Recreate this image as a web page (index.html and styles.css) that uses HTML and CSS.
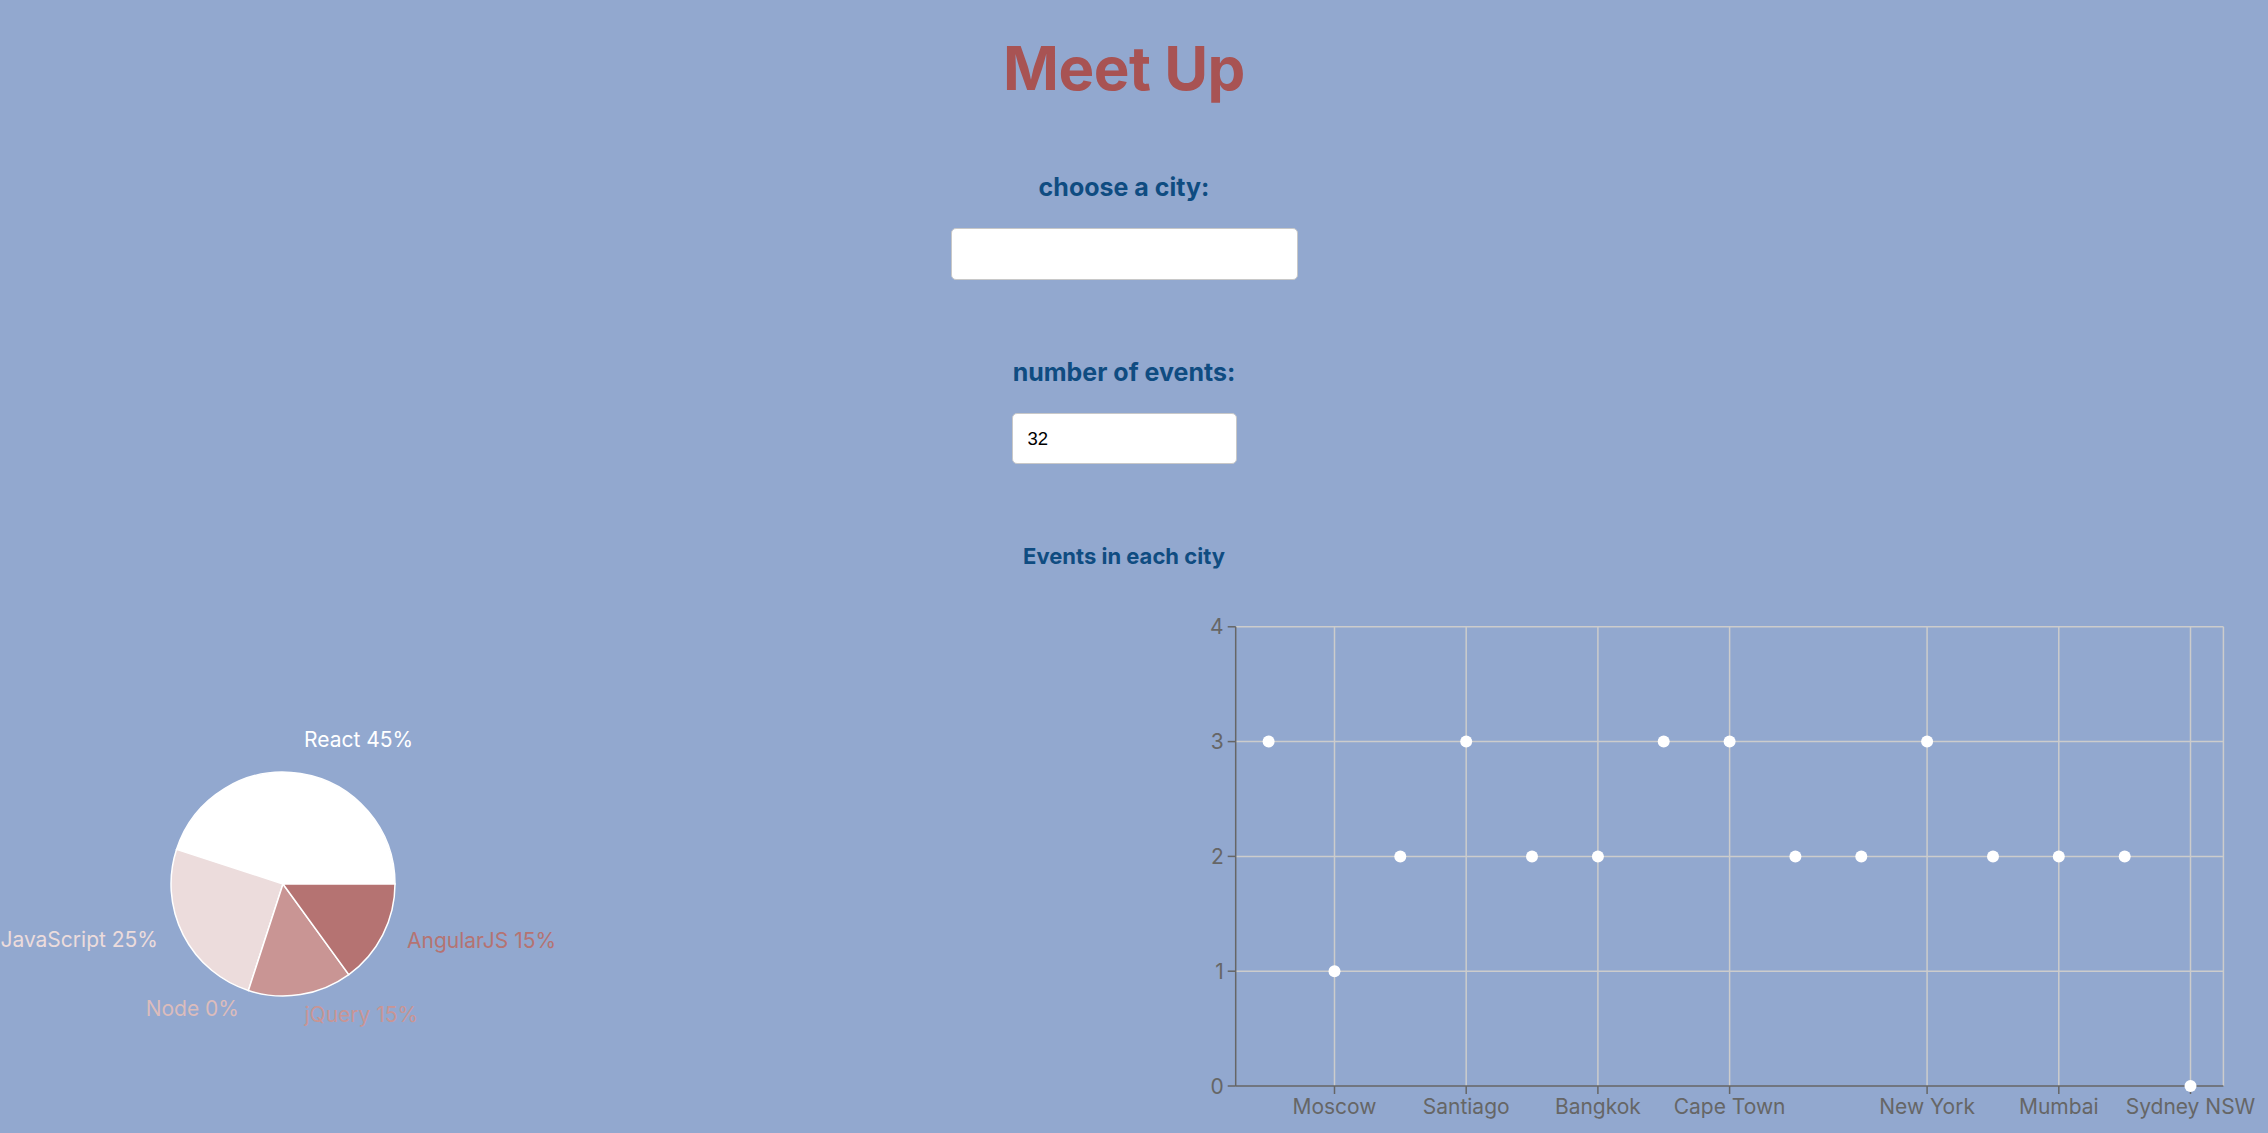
FILE: index.html
```html
<!DOCTYPE html>
<html lang="en">
<head>
<meta charset="utf-8">
<title>Meet Up</title>
<link rel="stylesheet" href="styles.css">
</head>
<body>
<div class="app">
  <h1 class="title">Meet Up</h1>
  <div class="field field-city">
    <label class="field-label" for="city">choose a city:</label>
    <input class="city-input" id="city" type="text" value="">
  </div>
  <div class="field field-num">
    <label class="field-label" for="num">number of events:</label>
    <input class="num-input" id="num" type="text" value="32">
  </div>
  <h4 class="chart-title">Events in each city</h4>
  <div class="charts">
    <svg class="pie" width="1124" height="576" viewBox="0 0 1124 576">
      <g stroke="#fff" stroke-width="1.5">
        <path d="M283,288 L395,288 A112,112 0 0 0 176.5,253.4 Z" fill="#ffffff"/>
        <path d="M283,288 L176.5,253.4 A112,112 0 0 0 248.4,394.5 Z" fill="#ecdcdc"/>
        <path d="M283,288 L248.4,394.5 A112,112 0 0 0 348.8,378.6 Z" fill="#c99594"/>
        <path d="M283,288 L348.8,378.6 A112,112 0 0 0 395,288 Z" fill="#b57372"/>
      </g>
      <g class="pie-labels">
        <text x="304" y="150.5" fill="#ffffff" text-anchor="start">React 45%</text>
        <text x="158" y="350.5" fill="#ecdcdc" text-anchor="end">JavaScript 25%</text>
        <text x="239" y="420" fill="#dcbcbc" text-anchor="end">Node 0%</text>
        <text x="304.5" y="425.5" fill="#c99594" text-anchor="start">jQuery 15%</text>
        <text x="407" y="351.5" fill="#b57372" text-anchor="start">AngularJS 15%</text>
      </g>
    </svg>
    <svg class="scatter" width="1124" height="576" viewBox="0 0 1124 576">
      <g stroke="#cccccc" stroke-width="1.5">
        <line x1="111.7" y1="30.8" x2="1099.4" y2="30.8"/>
        <line x1="111.7" y1="145.6" x2="1099.4" y2="145.6"/>
        <line x1="111.7" y1="260.4" x2="1099.4" y2="260.4"/>
        <line x1="111.7" y1="375.2" x2="1099.4" y2="375.2"/>
        <line x1="210.5" y1="30.8" x2="210.5" y2="490"/>
        <line x1="342.2" y1="30.8" x2="342.2" y2="490"/>
        <line x1="473.9" y1="30.8" x2="473.9" y2="490"/>
        <line x1="605.6" y1="30.8" x2="605.6" y2="490"/>
        <line x1="803.1" y1="30.8" x2="803.1" y2="490"/>
        <line x1="934.8" y1="30.8" x2="934.8" y2="490"/>
        <line x1="1066.5" y1="30.8" x2="1066.5" y2="490"/>
        <line x1="1099.4" y1="30.8" x2="1099.4" y2="490"/>
      </g>
      <g stroke="#666666" stroke-width="1.5">
        <line x1="111.7" y1="30.8" x2="111.7" y2="490"/>
        <line x1="111.7" y1="490" x2="1099.4" y2="490"/>
        <line x1="103.7" y1="30.8" x2="111.7" y2="30.8"/>
        <line x1="103.7" y1="145.6" x2="111.7" y2="145.6"/>
        <line x1="103.7" y1="260.4" x2="111.7" y2="260.4"/>
        <line x1="103.7" y1="375.2" x2="111.7" y2="375.2"/>
        <line x1="103.7" y1="490" x2="111.7" y2="490"/>
        <line x1="210.5" y1="490" x2="210.5" y2="498"/>
        <line x1="342.2" y1="490" x2="342.2" y2="498"/>
        <line x1="473.9" y1="490" x2="473.9" y2="498"/>
        <line x1="605.6" y1="490" x2="605.6" y2="498"/>
        <line x1="803.1" y1="490" x2="803.1" y2="498"/>
        <line x1="934.8" y1="490" x2="934.8" y2="498"/>
        <line x1="1066.5" y1="490" x2="1066.5" y2="498"/>
      </g>
      <g class="axis-text" text-anchor="end">
        <text x="99.7" y="38.3">4</text>
        <text x="99.7" y="153.1">3</text>
        <text x="99.7" y="267.9">2</text>
        <text x="99.7" y="382.7">1</text>
        <text x="99.7" y="497.5">0</text>
      </g>
      <g class="axis-text" text-anchor="middle">
        <text x="210.5" y="518">Moscow</text>
        <text x="342.2" y="518">Santiago</text>
        <text x="473.9" y="518">Bangkok</text>
        <text x="605.6" y="518">Cape Town</text>
        <text x="803.1" y="518">New York</text>
        <text x="934.8" y="518">Mumbai</text>
        <text x="1066.5" y="518">Sydney NSW</text>
      </g>
      <g fill="#ffffff">
        <circle cx="144.6" cy="145.6" r="6"/>
        <circle cx="210.5" cy="375.2" r="6"/>
        <circle cx="276.3" cy="260.4" r="6"/>
        <circle cx="342.2" cy="145.6" r="6"/>
        <circle cx="408.0" cy="260.4" r="6"/>
        <circle cx="473.9" cy="260.4" r="6"/>
        <circle cx="539.7" cy="145.6" r="6"/>
        <circle cx="605.6" cy="145.6" r="6"/>
        <circle cx="671.4" cy="260.4" r="6"/>
        <circle cx="737.3" cy="260.4" r="6"/>
        <circle cx="803.1" cy="145.6" r="6"/>
        <circle cx="869.0" cy="260.4" r="6"/>
        <circle cx="934.8" cy="260.4" r="6"/>
        <circle cx="1000.7" cy="260.4" r="6"/>
        <circle cx="1066.5" cy="490" r="6"/>
      </g>
    </svg>
  </div>
</div>
</body>
</html>
```
FILE: styles.css
```css
html, body {
  margin: 0;
  padding: 0;
  background: #92a8cf;
  overflow: hidden;
}

.app {
  width: 2248px;
  display: flex;
  flex-direction: column;
  align-items: center;
  font-family: Inter, "Noto Sans", sans-serif;
}

.title {
  margin: 32px 0 0;
  font-size: 60px;
  line-height: 72px;
  font-weight: 700;
  color: #a85353;
  letter-spacing: -0.5px;
}

.field {
  display: flex;
  flex-direction: column;
  align-items: center;
}

.field-label {
  font-size: 25px;
  line-height: 30px;
  font-weight: 700;
  color: #0f4c81;
}

.field-city .field-label {
  margin-top: 67.5px;
}

.field-num .field-label {
  margin-top: 77px;
}

.city-input,
.num-input {
  box-sizing: border-box;
  height: 52px;
  margin-top: 26.5px;
  background: #ffffff;
  border: 1px solid #c8c8c8;
  border-radius: 5px;
  font-family: "Liberation Sans", Arial, sans-serif;
  font-size: 18.5px;
  color: #000;
  padding: 0 15px;
  outline: none;
}

.city-input {
  width: 347px;
}

.num-input {
  width: 225px;
  height: 51px;
  margin-top: 26px;
}

.chart-title {
  margin: 78.3px 0 0;
  font-size: 22px;
  line-height: 28px;
  font-weight: 700;
  color: #0f4c81;
}

.charts {
  align-self: stretch;
  margin-top: 26px;
  display: grid;
  grid-template-columns: 1124px 1124px;
}

.charts svg {
  display: block;
  overflow: visible;
}

.pie-labels text {
  font-family: Inter, "Noto Sans", sans-serif;
  font-size: 21px;
}

.axis-text text {
  font-family: Inter, "Noto Sans", sans-serif;
  font-size: 21px;
  fill: #666666;
}
```
